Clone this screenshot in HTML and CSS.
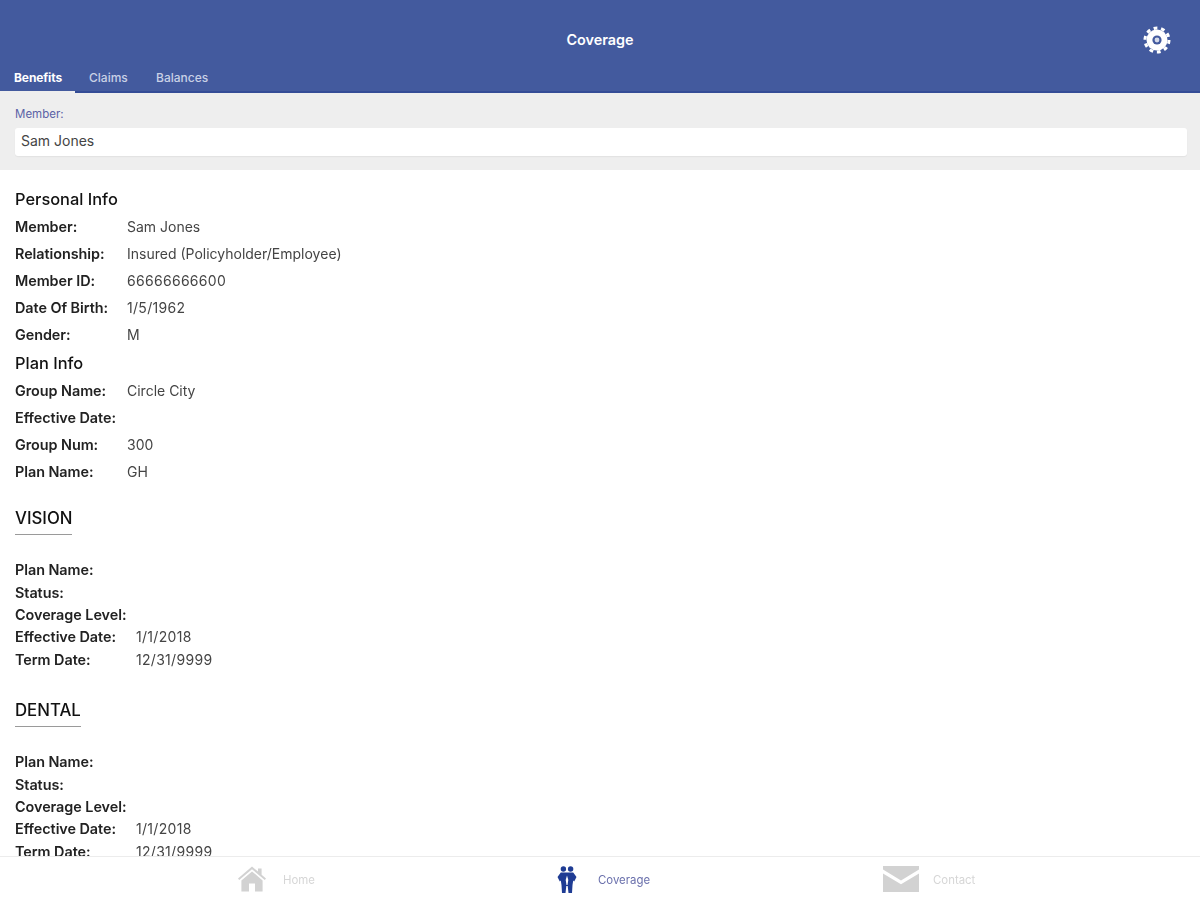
FILE: index.html
```html
<!DOCTYPE html>
<html lang="en">
<head>
<meta charset="utf-8">
<title>Coverage</title>
<link rel="stylesheet" href="styles.css">
</head>
<body>
<div class="app">
  <header class="header">
    <div class="titlebar">
      <h1 class="title">Coverage</h1>
      <svg class="gear" viewBox="0 0 28 28" width="28" height="28" aria-hidden="true">
        <circle cx="14" cy="14" r="10.5" fill="#fff"/>
        <circle cx="14" cy="14" r="12" fill="none" stroke="#fff" stroke-width="3" stroke-dasharray="3.77 3.77"/>
        <circle cx="14" cy="14" r="4.6" fill="#435a9e"/>
        <circle cx="14" cy="14" r="2.4" fill="#d5dbea"/>
      </svg>
    </div>
    <nav class="tabs">
      <a class="tab tab-active">Benefits</a>
      <a class="tab">Claims</a>
      <a class="tab">Balances</a>
    </nav>
  </header>

  <section class="member">
    <label class="member-label">Member:</label>
    <div class="member-input">Sam Jones</div>
  </section>

  <main class="content">
    <h2 class="heading heading-first">Personal Info</h2>
    <dl class="info">
      <div class="row"><dt>Member:</dt><dd>Sam Jones</dd></div>
      <div class="row"><dt>Relationship:</dt><dd>Insured (Policyholder/Employee)</dd></div>
      <div class="row"><dt>Member ID:</dt><dd class="num">66666666600</dd></div>
      <div class="row"><dt>Date Of Birth:</dt><dd class="num">1/5/1962</dd></div>
      <div class="row"><dt>Gender:</dt><dd>M</dd></div>
    </dl>
    <h2 class="heading heading-second">Plan Info</h2>
    <dl class="info">
      <div class="row"><dt>Group Name:</dt><dd>Circle City</dd></div>
      <div class="row"><dt>Effective Date:</dt><dd></dd></div>
      <div class="row"><dt>Group Num:</dt><dd>300</dd></div>
      <div class="row"><dt>Plan Name:</dt><dd>GH</dd></div>
    </dl>

    <section class="plan plan-vision">
      <h3 class="plan-title">VISION</h3>
      <dl class="plan-list">
        <div class="plan-row"><dt>Plan Name:</dt><dd></dd></div>
        <div class="plan-row"><dt>Status:</dt><dd></dd></div>
        <div class="plan-row"><dt>Coverage Level:</dt><dd></dd></div>
        <div class="plan-row"><dt>Effective Date:</dt><dd class="num">1/1/2018</dd></div>
        <div class="plan-row"><dt>Term Date:</dt><dd class="num">12/31/9999</dd></div>
      </dl>
    </section>

    <section class="plan plan-dental">
      <h3 class="plan-title">DENTAL</h3>
      <dl class="plan-list">
        <div class="plan-row"><dt>Plan Name:</dt><dd></dd></div>
        <div class="plan-row"><dt>Status:</dt><dd></dd></div>
        <div class="plan-row"><dt>Coverage Level:</dt><dd></dd></div>
        <div class="plan-row"><dt>Effective Date:</dt><dd class="num">1/1/2018</dd></div>
        <div class="plan-row"><dt>Term Date:</dt><dd class="num">12/31/9999</dd></div>
      </dl>
    </section>
  </main>

  <footer class="tabbar">
    <a class="bar-item bar-home">
      <svg viewBox="0 0 28 26" width="28" height="26" aria-hidden="true">
        <path fill="#d2d2d2" d="M14 0.5 L20 5.6V2.5h3.6v6.2L28 12.6l-1.2 1.4L14 3.2 1.2 14 0 12.6z"/>
        <path fill="#d2d2d2" d="M14 5.4 L24.6 14.4V25.5H17V17.5H11V25.5H3.4V14.4z"/>
      </svg>
      <span class="bar-label">Home</span>
    </a>
    <a class="bar-item bar-coverage">
      <svg viewBox="0 0 20 27" width="20" height="27" aria-hidden="true">
        <g fill="#1f3c94">
          <circle cx="6.400" cy="3" r="2.700"/>
          <circle cx="13.600" cy="3" r="2.700"/>
          <path fill-rule="evenodd" d="M3.800 6.500h12.400L19.500 11 17.200 15.500 16.200 14.500 15.500 19 15 27H11.500L10.700 20H9.300L8.500 27H5L4.500 19 3.800 14.500 2.800 15.500 0.500 11z M10 9.500L8.700 14 9.500 19H10.500L11.300 14z"/>
        </g>
      </svg>
      <span class="bar-label bar-label-active">Coverage</span>
    </a>
    <a class="bar-item bar-contact">
      <svg viewBox="0 0 36 26" width="36" height="26" aria-hidden="true">
        <path fill="#d2d2d2" d="M0 0h36v3.600L18 14.500 0 3.600z"/>
        <path fill="#d2d2d2" d="M0 7.400L18 18.300 36 7.400V26H0z"/>
      </svg>
      <span class="bar-label">Contact</span>
    </a>
  </footer>
</div>
</body>
</html>
```

FILE: styles.css
```css
* { box-sizing: border-box; }
html, body { margin: 0; padding: 0; }
body {
  font-family: Inter, "Liberation Sans", sans-serif;
  color: #222;
  background: #fff;
}
.app {
  width: 1200px;
  height: 900px;
  display: flex;
  flex-direction: column;
  overflow: hidden;
  filter: blur(0.45px);
}
.header {
  background: #435a9e;
  height: 93px;
  border-bottom: 2px solid #344c96;
  flex: none;
}
.titlebar {
  height: 64px;
  padding: 0 29px 0 0;
  display: flex;
  align-items: center;
  justify-content: flex-end;
  position: relative;
}
.title {
  position: absolute;
  left: 0;
  right: 0;
  top: 31px;
  margin: 0;
  text-align: center;
  color: #fff;
  font-size: 14.400px;
  line-height: 18px;
  font-weight: 600;
}
.gear { margin-top: 16px; }
.tabs {
  display: flex;
  height: 27px;
}
.tab {
  display: block;
  height: 29px;
  padding: 6px 13px 0 14px;
  color: #c9d1e6;
  font-size: 12px;
  line-height: 15px;
  font-weight: 500;
  margin-right: 0;
}
.tab-active {
  width: 75px;
  color: #fff;
  font-size: 12px;
  font-weight: 700;
  letter-spacing: -0.1px;
  border-bottom: 2px solid #eeeeee;
}
.tabs .tab:nth-child(2) { width: 67px; }
.member {
  background: #eeeeee;
  height: 77px;
  padding: 14px 13px 0 15px;
  flex: none;
}
.member-label {
  display: block;
  color: #5b62a6;
  font-size: 11.500px;
  line-height: 15px;
}
.member-input {
  margin-top: 6px;
  height: 28px;
  background: #fff;
  border-radius: 3px;
  box-shadow: 0 1px 1px #e2e2e2;
  padding: 0 6px;
  font-size: 14px;
  line-height: 26px;
  color: #444;
}
.content {
  flex: 1;
  min-height: 0;
  overflow: hidden;
  padding: 0 15px;
}
.heading {
  margin: 0;
  font-size: 16.400px;
  line-height: 27px;
  font-weight: 500;
  color: #111;
}
.heading-first { margin-top: 16px; }
.heading-second { margin-top: 2px; }
.info { margin: 0; }
.row {
  display: flex;
  height: 27px;
  align-items: center;
  font-size: 14px;
}
.row dt {
  width: 112px;
  flex: none;
  font-size: 14.400px;
  font-weight: 600;
  letter-spacing: -0.05px;
  color: #222;
  white-space: nowrap;
}
.row dd {
  margin: 0;
  color: #444;
}
.row dd.num,
.plan-row dd.num { letter-spacing: 0.3px; }
.plan-vision { margin-top: 20px; }
.plan-dental { margin-top: 26.500px; }
.plan-title {
  display: inline-block;
  margin: 0;
  font-size: 16.800px;
  line-height: 26px;
  font-weight: 500;
  color: #111;
  padding-bottom: 3px;
  border-bottom: 1px solid #9a9a9a;
}
.plan-list { margin: 23.500px 0 0; }
.plan-row {
  display: flex;
  height: 22.400px;
  align-items: center;
  font-size: 14px;
}
.plan-row dt {
  width: 121px;
  flex: none;
  font-size: 14.400px;
  font-weight: 600;
  letter-spacing: -0.05px;
  color: #222;
  white-space: nowrap;
}
.plan-row dd {
  margin: 0;
  color: #444;
}
.tabbar {
  flex: none;
  height: 44px;
  padding-top: 1px;
  background: #fff;
  border-top: 1px solid #ececec;
  position: relative;
  display: grid;
  grid-template-columns: 400px 400px 400px;
}
.bar-item {
  display: flex;
  align-items: center;
}
.bar-home { padding-left: 238px; gap: 17px; }
.bar-coverage { padding-left: 157px; gap: 21px; }
.bar-contact { padding-left: 83px; gap: 14px; }
.bar-label {
  font-size: 11.400px;
  padding-top: 2px;
  color: #d6d6d6;
}
.bar-label-active { color: #6a70ac; }
```
